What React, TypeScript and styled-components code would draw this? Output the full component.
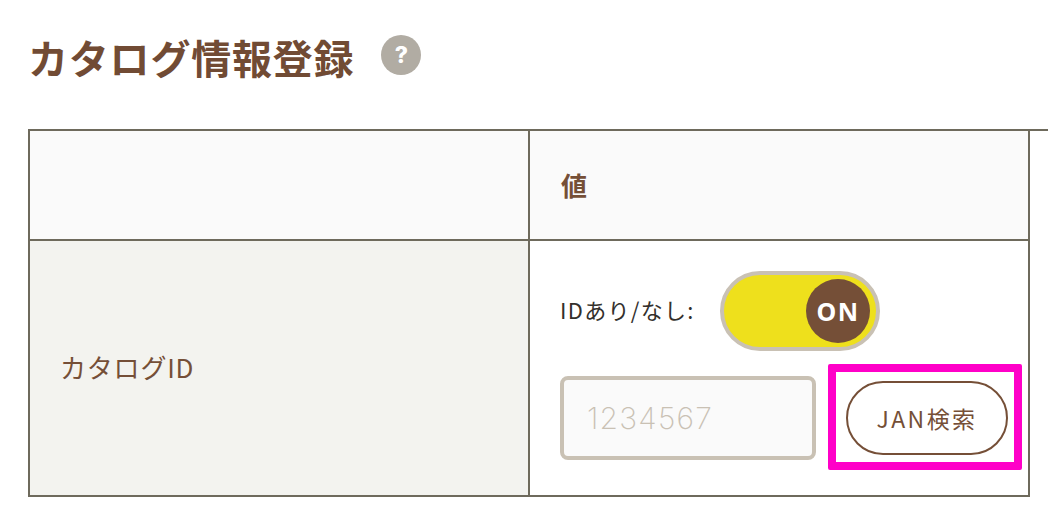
import React from 'react';
import styled, { createGlobalStyle } from 'styled-components';

const BROWN = '#754f37';
const LINE = '#6e6a5c';
const SAND = '#c9c1b4';

const GlobalStyle = createGlobalStyle`
  html, body {
    margin: 0;
    padding: 0;
    background: #fff;
    overflow: hidden;
  }
  body {
    font-family: "Noto Sans CJK JP", "Noto Sans", sans-serif;
    color: ${BROWN};
  }
`;

const Page = styled.div`
  width: 1048px;
  height: 516px;
  padding: 28px 0 0 28px;
  box-sizing: border-box;
`;

const TitleRow = styled.div`
  display: flex;
  align-items: center;
  gap: 27px;
  height: 60px;
  margin-bottom: 41px;
`;

const Title = styled.h1`
  margin: 0;
  position: relative;
  top: -1px;
  font-size: 40px;
  line-height: 60px;
  font-weight: 700;
  letter-spacing: 0.8px;
  color: #714b34;
`;

const HelpBadge = styled.span`
  display: flex;
  align-items: center;
  justify-content: center;
  width: 40px;
  height: 40px;
  margin-top: -6px;
  border-radius: 50%;
  background: #b1aca3;
  color: #fff;
  font-family: "Inter", sans-serif;
  font-size: 23px;
  font-weight: 800;
`;

const TableFrame = styled.div`
  border-top: 2px solid ${LINE};
`;

const Table = styled.table`
  width: 1002px;
  table-layout: fixed;
  border-collapse: separate;
  border-spacing: 0;
`;

const HeadCell = styled.th`
  height: 107px;
  padding: 0 0 1px 31px;
  box-sizing: content-box;
  background: #fafafa;
  border-right: 2px solid ${LINE};
  border-bottom: 2px solid ${LINE};
  font-size: 26px;
  font-weight: 700;
  text-align: left;
  &:first-child {
    border-left: 2px solid ${LINE};
  }
`;

const LabelCell = styled.td`
  padding: 0 0 4px 30px;
  background: #f3f3ef;
  border-left: 2px solid ${LINE};
  border-right: 2px solid ${LINE};
  border-bottom: 2px solid ${LINE};
  font-size: 26px;
  letter-spacing: 0.8px;
`;

const ValueCell = styled.td`
  height: 256px;
  padding: 30px 0 0 30px;
  box-sizing: border-box;
  vertical-align: top;
  background: #fff;
  border-right: 2px solid ${LINE};
  border-bottom: 2px solid ${LINE};
`;

const ToggleRow = styled.div`
  display: flex;
  align-items: center;
  gap: 24px;
  margin-bottom: 25px;
`;

const ToggleLabel = styled.span`
  margin-top: -5px;
  font-size: 22px;
  color: #33302c;
  letter-spacing: 1.3px;
  min-width: 136px;
  white-space: nowrap;
`;

const Toggle = styled.span`
  display: flex;
  align-items: center;
  justify-content: flex-end;
  width: 160px;
  height: 80px;
  padding: 0 6px;
  box-sizing: border-box;
  border: 4px solid ${SAND};
  border-radius: 40px;
  background: #eee01c;
`;

const Knob = styled.span`
  display: flex;
  align-items: center;
  justify-content: center;
  width: 64px;
  height: 64px;
  border-radius: 50%;
  background: ${BROWN};
  color: #fff;
  font-family: "Noto Sans", sans-serif;
  font-size: 25px;
  font-weight: 700;
  letter-spacing: 1.5px;
`;

const SearchRow = styled.div`
  display: flex;
  align-items: center;
  gap: 30px;
`;

const IdInput = styled.input`
  width: 256px;
  height: 84px;
  padding: 0 22px 1px 23px;
  box-sizing: border-box;
  border: 4px solid ${SAND};
  border-radius: 8px;
  background: #fafafa;
  font-family: "Inter", sans-serif;
  font-size: 30px;
  font-weight: 200;
  letter-spacing: 1.2px;
  &::placeholder {
    color: ${SAND};
    opacity: 1;
  }
`;

const JanButton = styled.button`
  position: relative;
  width: 162px;
  height: 74px;
  padding: 0;
  border: 2px solid ${BROWN};
  border-radius: 37px;
  background: #fff;
  color: ${BROWN};
  font-family: "Noto Sans CJK JP", sans-serif;
  font-size: 23px;
  letter-spacing: 2.4px;
  &::after {
    content: '';
    position: absolute;
    inset: -19px -16px -17px -20px;
    border: 8px solid #ff00c8;
    border-radius: 2px;
  }
`;

export default function App() {
  return (
    <>
      <GlobalStyle />
      <Page>
        <TitleRow>
          <Title>カタログ情報登録</Title>
          <HelpBadge>?</HelpBadge>
        </TitleRow>
        <TableFrame>
          <Table>
            <colgroup>
              <col style={{ width: 502 }} />
              <col style={{ width: 500 }} />
            </colgroup>
            <thead>
              <tr>
                <HeadCell />
                <HeadCell>値</HeadCell>
              </tr>
            </thead>
            <tbody>
              <tr>
                <LabelCell>カタログID</LabelCell>
                <ValueCell>
                  <ToggleRow>
                    <ToggleLabel>IDあり/なし:</ToggleLabel>
                    <Toggle>
                      <Knob>ON</Knob>
                    </Toggle>
                  </ToggleRow>
                  <SearchRow>
                    <IdInput placeholder="1234567" readOnly />
                    <JanButton type="button">JAN検索</JanButton>
                  </SearchRow>
                </ValueCell>
              </tr>
            </tbody>
          </Table>
        </TableFrame>
      </Page>
    </>
  );
}
